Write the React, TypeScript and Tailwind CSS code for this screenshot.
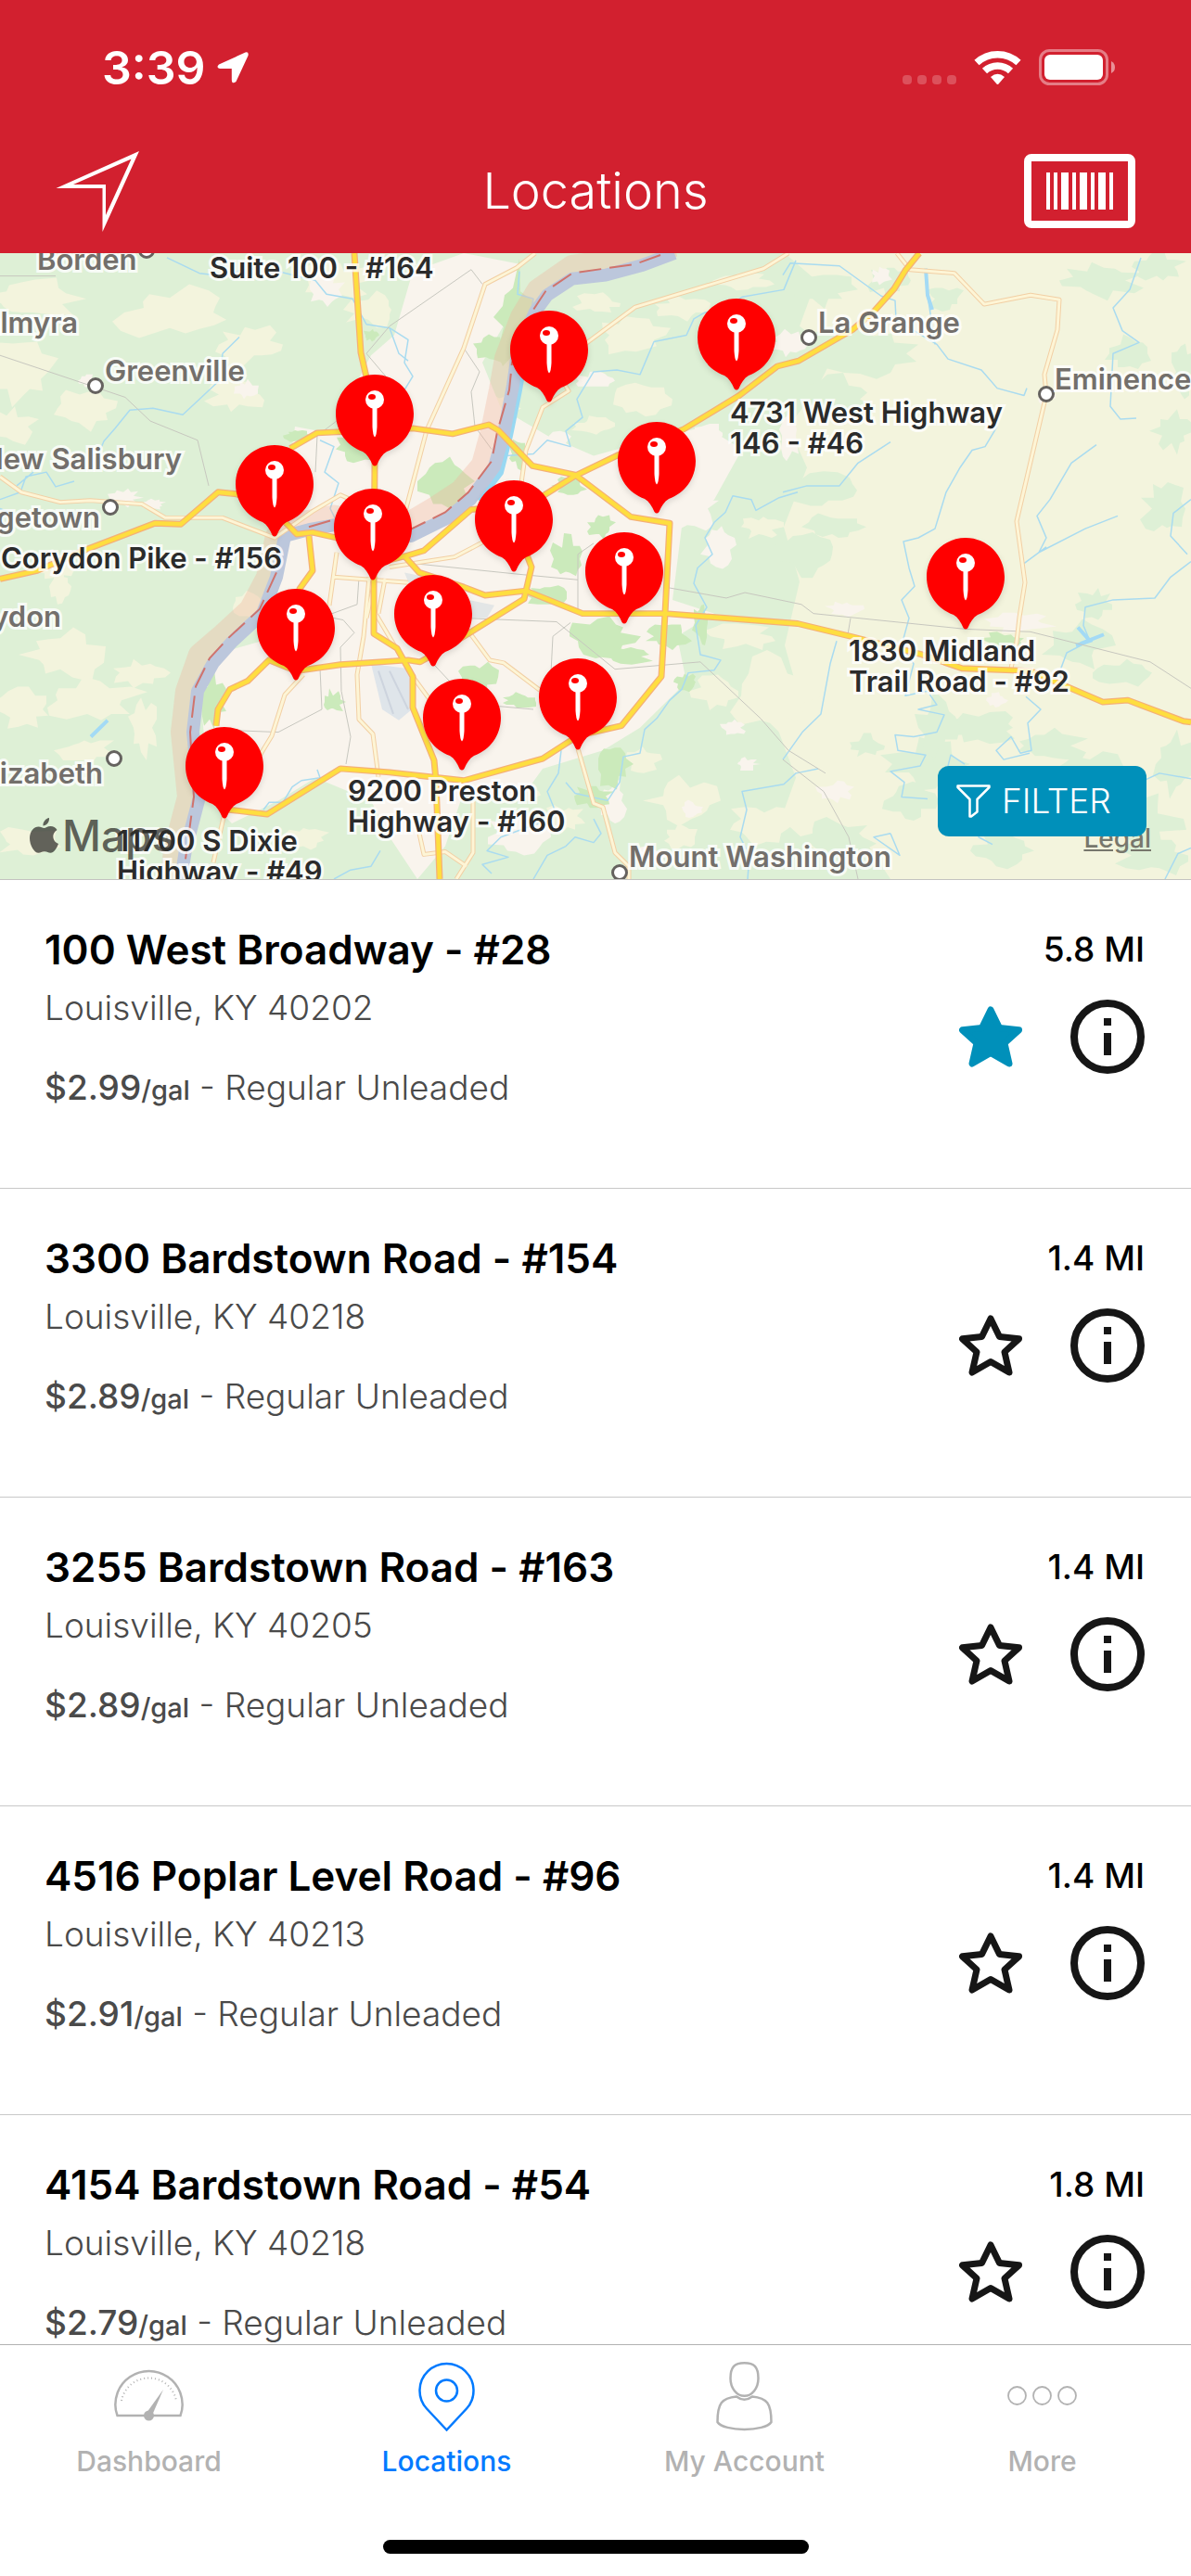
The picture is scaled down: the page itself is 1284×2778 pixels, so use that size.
import React, { useState } from 'react';

interface Station {
  id: number;
  name: string;
  city: string;
  price: string;
  distance: string;
}

interface Point {
  x: number;
  y: number;
}

interface MapLabel {
  lines: string[];
  top: number;
  left?: number;
  // names cut off by the left edge are anchored on their right end
  end?: number;
}

const stations: Station[] = [
  { id: 28, name: '100 West Broadway - #28', city: 'Louisville, KY 40202', price: '$2.99', distance: '5.8 MI' },
  { id: 154, name: '3300 Bardstown Road - #154', city: 'Louisville, KY 40218', price: '$2.89', distance: '1.4 MI' },
  { id: 163, name: '3255 Bardstown Road - #163', city: 'Louisville, KY 40205', price: '$2.89', distance: '1.4 MI' },
  { id: 96, name: '4516 Poplar Level Road - #96', city: 'Louisville, KY 40213', price: '$2.91', distance: '1.4 MI' },
  { id: 54, name: '4154 Bardstown Road - #54', city: 'Louisville, KY 40218', price: '$2.79', distance: '1.8 MI' },
];

const pins: Point[] = [
  { x: 794, y: 49 },
  { x: 592, y: 62 },
  { x: 404, y: 131 },
  { x: 708, y: 182 },
  { x: 296, y: 207 },
  { x: 554, y: 245 },
  { x: 402, y: 254 },
  { x: 673, y: 301 },
  { x: 1041, y: 307 },
  { x: 467, y: 347 },
  { x: 319, y: 362 },
  { x: 623, y: 437 },
  { x: 498, y: 459 },
  { x: 242, y: 511 },
];

const towns: MapLabel[] = [
  { lines: ['Borden'], left: 40, top: -10 },
  { lines: ['Palmyra'], end: 84, top: 58 },
  { lines: ['Greenville'], left: 113, top: 110 },
  { lines: ['New Salisbury'], end: 196, top: 205 },
  { lines: ['Georgetown'], end: 108, top: 268 },
  { lines: ['Corydon'], end: 66, top: 375 },
  { lines: ['Elizabeth'], end: 111, top: 544 },
  { lines: ['La Grange'], left: 882, top: 58 },
  { lines: ['Eminence'], left: 1137, top: 119 },
  { lines: ['Mount Washington'], left: 678, top: 634 },
];

const townDots: Point[] = [
  { x: 158, y: -3 },
  { x: 103, y: 143 },
  { x: 119, y: 274 },
  { x: 123, y: 545 },
  { x: 872, y: 91 },
  { x: 1128, y: 152 },
  { x: 668, y: 668 },
];

const storeLabels: MapLabel[] = [
  { lines: ['Suite 100 - #164'], left: 226, top: -1 },
  { lines: ['4731 West Highway', '146 - #46'], left: 787, top: 155 },
  { lines: ['Corydon Pike - #156'], end: 304, top: 312 },
  { lines: ['1830 Midland', 'Trail Road - #92'], left: 915, top: 412 },
  { lines: ['9200 Preston', 'Highway - #160'], left: 375, top: 563 },
  { lines: ['11700 S Dixie', 'Highway - #49'], left: 126, top: 617 },
];

const highways = [
  'M382 0 389 109 395 136 404 230 403 355 403 417 428 433 445 464 445 498 468 556 470 578 474 686',
  'M0 357 40 348 90 326 167 296 195 297 235 262 255 264 296 283 320 308 337 306 363 312 402 341 437 332 457 326 508 281 530 279 587 265 620 244 667 221 737 193 797 156 838 124 861 118 919 84 942 64 964 39 976 19 991 0',
  'M313 214 342 197 363 196 445 192 488 198 527 188 537 194 574 233 620 243 680 289 722 296 717 395 713 464 670 518 623 529 585 554 500 578 420 569 367 565 288 615 247 610',
  'M233 518 235 500 248 478 267 469 290 446 319 458 367 451 440 446 453 448 467 440 505 417 565 379 573 344 567 328',
  'M437 333 452 350 500 366 523 375 567 370 628 395 717 395 860 406 917 420 994 440 1037 455 1111 458 1189 492 1216 490 1276 513 1284 514',
  'M333 310 337 348 323 368 319 400',
];

const roads = [
  'M0 245 23 262 65 273 97 271 153 275 178 290 240 290 296 312 337 283 367 265 400 280',
  'M577 0 557 16 523 34 500 104 460 194 437 283',
  'M850 0 823 17 685 59 633 98 600 130 613 151 585 169 567 216 562 252',
  'M967 0 981 18 1029 22 1061 56 1111 46 1142 51 1140 84 1126 133 1128 155 1096 294 1105 361 1099 399 1096 426 1090 455',
  'M507 417 528 446 543 449 582 479',
  'M623 543 640 603 650 607 663 657 678 672 678 686',
  'M398 355 392 420 385 462 387 511 402 527 408 574',
  'M327 462 307 484 293 529 242 614 230 668',
  'M363 328 355 386M360 355 440 361',
  'M420 344 490 333 520 317',
  'M510 601 510 657 492 686M452 636 457 659 480 656 503 672',
  'M405 395 445 464 463 489 498 565',
  'M405 355 395 400M415 357 408 395',
];

const rails = [
  'M0 112 97 145 135 158 162 184 213 205 225 255',
  'M60 25 0 25M420 80 395 110 420 140 342 200 340 240M420 80 508 18 520 34',
  'M500 104 517 130 508 152 512 190 530 215',
  'M445 340 560 352 623 358 623 330 640 318M623 358 623 390',
  'M500 400 600 404 663 456 755 448 820 510 850 545 890 570',
  'M717 366 783 378 803 372 864 385 877 395 1041 412 1111 415 1240 448 1284 477',
  'M844 555 888 590 915 640 925 686M917 400 914 418',
  'M387 355 385 385 350 398 370 402 382 416 367 432 368 480 378 530 373 560M345 455 347 500 300 525 250 523',
  'M594 460 596 420 615 405M467 450 490 475 520 495 575 500',
];

const streams = [
  'M180 5 215 22 240 25 262 18M300 20 340 30 352 45 380 50 395 78 420 82 430 110 440 118',
  'M258 92 240 110 236 140 215 160 197 177 165 170 140 172 124 192 112 206 100 235',
  'M0 270 22 262 28 245 50 240 60 256 80 250M18 255 36 240M0 280 12 285',
  'M345 205 360 212 350 240 365 252 356 280 362 292M420 82 440 95 436 120 445 135 430 160',
  'M560 20 558 45 575 50 572 66M858 8 845 40 800 48 780 62 760 65 748 72 740 90 705 97 690 133 665 128 640 130 622 160 628 180 610 195 615 212 590 205 575 220 545 222',
  'M860 262 840 268 815 282 810 270 790 266 782 284 770 295 760 312 768 330 752 345 748 362 762 388 750 408 755 440 777 446 770 457 742 460 735 478 722 490 708 510 695 522 690 548 672 552 668 580 655 600 620 592 610 580',
  'M605 545 602 570 590 590 598 610 580 625 540 640 525 655 548 662 520 670 530 680',
  'M284 610 290 602 305 602 315 585 325 578 345 575 342 566',
  'M360 686 378 676 400 672 410 655M575 686 590 660 610 650 620 640 640 646 648 636 640 620',
  'M844 24 852 11 905 14 950 47 965 52 966 73 1010 100 1022 116 1058 128 1075 148 1104 156 1107 148',
  'M844 262 870 255 905 255 925 230 960 207',
  'M1075 190 1062 212 1048 216 1035 235 1020 262 1008 302 990 312 974 316 980 345 986 365 972 380 980 400 972 430 985 450 976 485 1000 480 1010 495 990 500 1018 506 1010 525 985 530 965 528 968 545 998 550 992 562 960 568 975 580 972 596 1000 598',
  'M1106 486 1122 500 1108 515 1112 545 1100 548 1090 530 1074 545 1082 555 1110 548',
  'M1182 210 1155 230 1132 270 1118 288 1128 312 1120 328 1170 302 1205 288M1104 340 1128 322',
  'M1230 5 1218 40 1200 60 1210 85 1228 98 1200 110 1197 168 1208 182 1225 181',
  'M1284 270 1265 285 1262 310 1280 330M1284 338 1262 355 1245 378 1200 380 1170 388 1168 408 1175 425 1150 438 1142 460 1150 480',
  'M844 555 865 525 885 505 895 450 902 425M1208 590 1250 570 1284 576M1256 686 1270 658 1284 652',
  'M1040 560 1025 550 1020 570 1065 600 1055 640 1070 648M960 636 970 660 942 640 960 636',
  'M998 17 1000 46 1008 100',
  'M882 565 858 570 845 582 800 590 805 610 798 640 808 660 806 686',
];

const river =
  'M727 0 693 13 653 24 617 28 590 46 577 64 558 109 553 145 543 198 533 234 507 270 483 290 443 310 402 306 360 298 333 303 307 310 298 355 283 395 250 426 230 449 213 480 208 525 215 596 200 654 195 686';

const riverBank =
  'M727 -8 680 5 617 14 580 40 562 70 545 115 539 150 530 195 520 232 497 260 470 278 440 296 402 296 360 288 325 295 298 310 288 355 270 390 238 420 215 440 201 480 196 525 203 596 188 654 185 686';

// jagged land cover outline, always the same for the same seed
const patch = (x: number, y: number, rx: number, ry: number, seed: number) => {
  const count = 18;
  const out: string[] = [];
  for (let i = 0; i < count; i++) {
    const noise = Math.abs(Math.sin(seed * 12.9898 + i * 78.233) * 43758.5453) % 1;
    const r = 0.5 + noise * 0.6;
    const a = (i / count) * Math.PI * 2;
    out.push(`${Math.round(x + Math.cos(a) * rx * r)},${Math.round(y + Math.sin(a) * ry * r)}`);
  }
  return out.join(' ');
};

const fields = [
  [30, 50, 60, 26], [190, 65, 75, 30], [270, 100, 42, 24], [255, 155, 34, 20], [20, 130, 42, 40],
  [90, 170, 40, 24], [10, 190, 34, 22], [60, 345, 26, 16], [70, 440, 55, 32], [100, 490, 60, 26],
  [25, 500, 34, 24], [150, 460, 34, 16], [155, 520, 18, 34], [95, 545, 34, 16], [65, 365, 16, 22],
  [270, 385, 26, 16], [30, 645, 40, 18], [360, 30, 44, 22], [400, 62, 32, 20], [490, 85, 26, 40],
  [680, 90, 46, 24], [735, 60, 34, 14], [645, 55, 28, 12], [690, 160, 34, 20], [640, 190, 26, 12],
  [800, 420, 40, 16], [835, 485, 48, 50], [770, 480, 26, 20], [740, 600, 44, 26], [690, 555, 22, 16],
  [820, 625, 40, 24], [610, 620, 26, 18], [560, 590, 28, 14], [330, 640, 26, 14], [800, 30, 36, 12],
  [540, 170, 20, 22], [820, 300, 24, 14], [770, 230, 24, 10], [735, 640, 22, 14],
];

const woods = [
  [935, 110, 70, 34], [900, 160, 50, 28], [880, 40, 46, 20], [1020, 50, 24, 14], [1185, 30, 50, 22],
  [1250, 15, 30, 18], [1215, 110, 26, 22], [1265, 195, 24, 26], [1255, 280, 26, 34], [1275, 130, 14, 30],
  [880, 260, 50, 24], [870, 330, 34, 26], [900, 300, 34, 16], [1160, 430, 40, 30], [1210, 460, 32, 16],
  [1180, 385, 22, 18], [900, 640, 50, 22], [1000, 560, 50, 28], [1060, 520, 52, 22], [1130, 540, 46, 22],
  [1220, 620, 60, 34], [1180, 570, 50, 24], [1265, 560, 26, 40], [980, 600, 34, 28], [1010, 520, 24, 40],
  [935, 540, 22, 14], [1245, 660, 44, 24], [1080, 655, 40, 22], [960, 30, 26, 18],
];

const suburbs = [
  [350, 40, 22, 22], [265, 150, 14, 12], [135, 268, 18, 10], [165, 275, 14, 6], [95, 140, 10, 8],
  [640, 140, 24, 10], [760, 200, 28, 14], [850, 100, 22, 16], [850, 200, 14, 30], [775, 320, 20, 26],
  [680, 240, 44, 16], [745, 280, 30, 26], [660, 600, 16, 26], [700, 660, 22, 12], [560, 640, 40, 26],
  [1128, 155, 10, 12], [1100, 405, 38, 12], [910, 390, 22, 10], [1075, 490, 12, 10], [900, 590, 22, 14],
  [745, 610, 14, 10], [950, 25, 12, 10], [600, 210, 20, 14], [790, 520, 14, 10], [805, 560, 14, 8],
];

const parks = [
  [555, 70, 24, 60], [530, 105, 20, 16], [385, 215, 26, 18], [480, 250, 32, 34], [560, 220, 14, 18],
  [615, 255, 20, 12], [648, 300, 16, 14], [612, 335, 20, 26], [590, 375, 26, 14], [650, 420, 40, 22],
  [675, 440, 34, 10], [515, 465, 22, 20], [560, 490, 22, 10], [228, 490, 16, 32], [358, 492, 14, 14],
  [400, 90, 10, 8], [740, 470, 14, 10], [660, 560, 24, 26], [640, 595, 22, 14], [1080, 425, 26, 10],
  [755, 405, 10, 26], [320, 200, 14, 8], [720, 420, 26, 14], [600, 470, 18, 8],
];

const BaseMap: React.FC = () => (
  <svg
    className="absolute inset-0 h-full w-full"
    viewBox="0 0 1284 686"
    preserveAspectRatio="none"
    fill="none"
    aria-hidden="true"
  >
    <rect width="1284" height="686" fill="#def0d6" />
    <path
      d="M846 0 880 30 862 80 900 110 880 150 850 190 870 235 845 300 862 360 846 430 860 480 838 520 858 575 842 620 880 655 930 640 960 686H1284V0Z"
      fill="#f3f4dd"
    />
    {fields.map(([x, y, rx, ry], i) => (
      <polygon key={i} points={patch(x, y, rx, ry, i + 1)} fill="#f3f4dd" />
    ))}
    {woods.map(([x, y, rx, ry], i) => (
      <polygon key={i} points={patch(x, y, rx, ry, i + 60)} fill="#def0d6" />
    ))}
    {/* Louisville metro area */}
    <path
      d="M400 112 425 90 445 20 500 0 560 12 548 70 520 120 540 170 590 200 640 222 700 205 760 190 800 215 770 270 735 300 725 380 770 395 730 420 740 470 690 520 650 545 585 565 560 600 500 590 480 650 450 686 420 640 400 600 340 575 300 600 250 625 226 600 222 540 240 480 285 440 292 400 305 350 300 310 310 250 318 190 370 200 380 150Z"
      fill="#f9f4ed"
    />
    <path d="M215 470 230 440 300 420 320 470 290 560 225 590Z" fill="#f9f4ed" />
    {suburbs.map(([x, y, rx, ry], i) => (
      <polygon key={i} points={patch(x, y, rx, ry, i + 120)} fill="#f9f4ed" />
    ))}
    {parks.map(([x, y, rx, ry], i) => (
      <polygon key={i} points={patch(x, y, rx, ry, i + 180)} fill="#cbeabb" />
    ))}
    <path d="M400 450 445 456 444 500 430 512 412 500Z" fill="#dfe5ea" />
    <path d="M505 380 533 386 525 400 500 400ZM436 350 460 355 470 370 445 372Z" fill="#e3e6e6" />
    <path d="M408 458 424 505M420 458 440 500" stroke="#cdd4de" strokeWidth="2" />

    {streams.map((d) => (
      <path key={d} d={d} stroke="#a9dbf0" strokeWidth="1.500" strokeLinejoin="round" />
    ))}
    <path d="M998 17 1000 46 1005 62M1162 410 1175 425 1160 430M1165 428 1190 418M98 530 116 512" stroke="#a3daf5" strokeWidth="4" />
    {rails.map((d) => (
      <path key={d} d={d} stroke="#c6c6be" strokeWidth="1" />
    ))}

    <path d={riverBank} stroke="#f0b49a" strokeOpacity="0.34" strokeWidth="24" strokeLinejoin="round" />
    <path d="M564 115 558 150 548 200 538 240 515 270" stroke="#98d8f2" strokeWidth="10" />
    <path d={river} stroke="#bcc7dc" strokeWidth="14" strokeLinejoin="round" />
    <path
      d="M712 2 685 12 617 22 588 42 575 62 552 120 549 150 536 196 530 228 505 262 480 284 440 304M333 300 360 292M298 350 280 390 246 422 226 444 211 475 205 525 209 596 200 664"
      stroke="#d0736c"
      strokeWidth="2"
      strokeDasharray="24 9"
    />

    {roads.map((d) => (
      <path key={d} d={d} stroke="#f2cfa4" strokeWidth="5" strokeLinejoin="round" />
    ))}
    {roads.map((d) => (
      <path key={d} d={d} stroke="#fdf5d6" strokeWidth="3" strokeLinejoin="round" />
    ))}
    {highways.map((d) => (
      <path key={d} d={d} stroke="#f5b077" strokeWidth="7" strokeLinejoin="round" />
    ))}
    {highways.map((d) => (
      <path key={d} d={d} stroke="#fede3f" strokeWidth="4.500" strokeLinejoin="round" />
    ))}
  </svg>
);

const PinIcon: React.FC = () => (
  <svg className="h-[99px] w-[84px] drop-shadow-md" viewBox="0 0 84 99" aria-hidden="true">
    <path
      d="M42 0C65.200 0 84 18.800 84 42C84 61 72 77 55 83C50 86 47 91 44.500 97Q42 100 39.500 97C37 91 34 86 29 83C12 77 0 61 0 42C0 18.800 18.800 0 42 0Z"
      fill="#ff0000"
    />
    <path d="M39.500 34H44.500V56Q44 66 42 67.500Q40 66 39.500 56Z" fill="#fff" />
    <circle cx="42" cy="27" r="10" fill="#fff" />
    <ellipse cx="39" cy="24" rx="4" ry="3" fill="#ff0000" />
  </svg>
);

const LabelText: React.FC<{ label: MapLabel; className: string }> = ({ label, className }) => (
  <div
    className={`absolute text-[31px] leading-[33px] font-semibold whitespace-nowrap [paint-order:stroke_fill] [-webkit-text-stroke:6px_#ffffffcc] ${className}`}
    style={{
      top: label.top,
      left: label.left,
      right: label.end === undefined ? undefined : `calc(100% - ${label.end}px)`,
    }}
  >
    {label.lines.map((line) => (
      <div key={line}>{line}</div>
    ))}
  </div>
);

const StationMap: React.FC = () => (
  <section aria-label="Map" className="relative h-[676px] shrink-0 overflow-hidden border-b border-[#c3c3c0]">
    <BaseMap />

    {townDots.map((dot) => (
      <span
        key={`${dot.x}-${dot.y}`}
        className="absolute size-[18px] -translate-1/2 rounded-full border-3 border-[#65625f] bg-white"
        style={{ left: dot.x, top: dot.y }}
      />
    ))}
    {towns.map((label) => (
      <LabelText key={label.lines[0]} label={label} className="text-[#736f6b]" />
    ))}
    {storeLabels.map((label) => (
      <LabelText key={label.lines[0]} label={label} className="text-[#2b2b2b]" />
    ))}
    {pins.map((pin) => (
      <button
        key={`${pin.x}-${pin.y}`}
        type="button"
        aria-label="Station"
        className="absolute -translate-x-1/2"
        style={{ left: pin.x, top: pin.y }}
      >
        <PinIcon />
      </button>
    ))}

    <div className="absolute bottom-[22px] left-8 flex items-center gap-1 text-[#32322d]/75">
      <svg className="h-[38px] w-[31px]" viewBox="0 0 31 38" fill="currentColor" aria-hidden="true">
        <path d="M21 0C21.500 4.500 18 8.500 14.500 8.500C14 4.500 17.500 .5 21 0ZM15.500 11C17.500 11 19 9 22.500 9C25.500 9 28 10.500 29.500 13C23 17 24.500 25.500 31 28C29 33 26 37.800 22.500 37.800C19.800 37.800 19.200 36.200 16 36.200C12.800 36.200 12 37.800 9.500 37.800C5 37.800 0 29.500 0 22C0 14 5 9.500 9.500 9.500C12 9.500 14 11 15.500 11Z" />
      </svg>
      <span className="text-[46px] leading-[50px] font-medium">Maps</span>
    </div>
    <a href="#legal" className="absolute right-[43px] bottom-7 text-[28px] leading-[32px] font-medium text-[#77776c] underline">
      Legal
    </a>
    <button
      type="button"
      className="absolute right-12 bottom-[46px] flex h-[76px] w-[225px] items-center gap-3 rounded-xl bg-[#0090ba] pl-5 text-[37px] font-light text-white"
    >
      <svg className="h-9 w-[37px]" viewBox="0 0 37 36" fill="none" stroke="currentColor" strokeWidth="2.500" strokeLinejoin="round" aria-hidden="true">
        <path d="M1.500 1.500H35.500V3L22.500 16V29.500L16 34.500H14.500V16L1.500 3Z" />
      </svg>
      FILTER
    </button>
  </section>
);

const StatusBar: React.FC = () => (
  <div className="flex h-[146px] items-center justify-between pr-[82px] pl-[110px] text-white">
    <div className="flex items-center gap-3 text-[50px] leading-[60px] font-semibold">
      3:39
      <svg className="h-[34px] w-[34px]" viewBox="0 0 34 34" fill="currentColor" aria-hidden="true">
        <path d="M2 13.500 30.500 .5Q34.500 -.5 33.500 4L20.500 32Q16 35.500 15.800 30V18H3Q-1.500 17 2 13.500Z" />
      </svg>
    </div>
    <svg className="h-10 w-[230px]" viewBox="972 53 230 40" aria-hidden="true">
      <g fill="#fff" fillOpacity="0.22">
        <rect x="973" y="81" width="10" height="10" rx="4" />
        <rect x="989" y="81" width="10" height="10" rx="4" />
        <rect x="1005" y="81" width="10" height="10" rx="4" />
        <rect x="1021" y="81" width="10" height="10" rx="4" />
      </g>
      <g fill="none" stroke="#fff" strokeWidth="7.500">
        <path d="M1053 67.500A33 33 0 0 1 1098 67.500" />
        <path d="M1061.500 76.500A20.500 20.500 0 0 1 1089.500 76.500" />
      </g>
      <path d="M1068 83Q1075.500 76.500 1083 83L1076.500 90.500Q1075.500 91.500 1074.500 90.500Z" fill="#fff" />
      <rect x="1121.500" y="54.500" width="72" height="36" rx="10" fill="none" stroke="#fff" strokeOpacity="0.42" strokeWidth="3" />
      <rect x="1126" y="59" width="63" height="27" rx="6" fill="#fff" />
      <path d="M1198 66Q1202 68 1202 72.500T1198 79Z" fill="#fff" fillOpacity="0.5" />
    </svg>
  </div>
);

const Header: React.FC = () => (
  <header className="shrink-0 bg-[#d2202f] font-light text-white">
    <StatusBar />
    <div className="grid h-[127px] grid-cols-[1fr_auto_1fr] items-center px-[60px] pb-2">
      <button type="button" aria-label="Center on my location" className="justify-self-start">
        <svg className="h-[88px] w-[90px]" viewBox="0 0 90 88" fill="currentColor" fillRule="evenodd" aria-hidden="true">
          <path d="M.5 41 90 1 50.500 88V41ZM19 37H54V70L81.500 9.500Z" />
        </svg>
      </button>
      <h1 className="text-[54px] leading-[60px]">Locations</h1>
      <button type="button" aria-label="Show my barcode" className="justify-self-end">
        <svg className="h-20 w-[120px]" viewBox="0 0 120 80" aria-hidden="true">
          <rect x="4" y="4" width="112" height="72" rx="4" fill="none" stroke="#fff" strokeWidth="8" />
          <path
            d="M24 20h4v40h-4zM32 20h4v40h-4zM40 20h8v40h-8zM52 20h4v40h-4zM60 20h8v40h-8zM72 20h4v40h-4zM80 20h8v40h-8zM92 20h4v40h-4z"
            fill="#fff"
          />
        </svg>
      </button>
    </div>
  </header>
);

const StationRow: React.FC<{ station: Station; favorite: boolean; onToggle: () => void }> = ({
  station,
  favorite,
  onToggle,
}) => (
  <li className="flex h-[333px] shrink-0 justify-between border-b border-[#c8c8c8] pt-[50px] pr-[50px] pl-12">
    <div className="text-[37px] leading-[44px] font-light text-[#4a4a4a]">
      <h2 className="text-[44px] leading-[50px] font-semibold text-black">{station.name}</h2>
      <p className="mt-4">{station.city}</p>
      <p className="mt-[42px]">
        <span className="font-medium">{station.price}</span>
        <span className="text-[29px] font-medium">/gal</span> - Regular Unleaded
      </p>
    </div>
    <div className="flex flex-col items-end">
      <p className="text-[37px] leading-[50px] font-medium text-black">{station.distance}</p>
      <div className="mt-[29px] flex items-center gap-[52px]">
        <button type="button" aria-label="Favorite" aria-pressed={favorite} onClick={onToggle}>
          <svg
            className={`h-[66px] w-[68px] ${favorite ? 'fill-[#0090ba] stroke-[#0090ba]' : 'fill-none stroke-[#161616]'}`}
            viewBox="0 0 68 66"
            strokeWidth="7"
            strokeLinejoin="round"
            aria-hidden="true"
          >
            <path d="M34 4 43.500 23.500 64.500 25.800 49 40 54 62 34 50.500 14 62 19 40 3.500 25.800 24.500 23.500Z" />
          </svg>
        </button>
        <button type="button" aria-label="Station details">
          <svg className="size-20" viewBox="0 0 80 80" aria-hidden="true">
            <circle cx="40" cy="40" r="36" fill="none" stroke="#161616" strokeWidth="8" />
            <path d="M36 20h8v8h-8zM36 36h8v24h-8z" fill="#161616" />
          </svg>
        </button>
      </div>
    </div>
  </li>
);

const DashboardIcon: React.FC = () => (
  <svg className="size-[75px]" viewBox="0 0 75 75" fill="none" stroke="currentColor" strokeWidth="2.500" aria-hidden="true">
    <path d="M3.500 58Q-1 46 3.800 33A36.200 36.200 0 0 1 71.200 33Q76 46 71.500 58Z" />
    <path d="M8 42A30 30 0 0 1 67 42" strokeWidth="2" strokeDasharray="1 3" />
    <path d="M35 55 53 30 40 60Z" fill="currentColor" stroke="none" />
    <circle cx="37.500" cy="58" r="5.500" fill="currentColor" stroke="none" />
  </svg>
);

const LocationsIcon: React.FC = () => (
  <svg className="size-[75px]" viewBox="0 0 75 75" fill="none" stroke="currentColor" strokeWidth="2.500" aria-hidden="true">
    <path d="M37.500 73.500 16 50.500A29 29 0 1 1 59 50.500Z" />
    <circle cx="37.500" cy="31" r="11.500" />
  </svg>
);

const AccountIcon: React.FC = () => (
  <svg className="size-[75px]" viewBox="0 0 75 75" fill="none" stroke="currentColor" strokeWidth="2.500" aria-hidden="true">
    <path d="M37.500 1.300C48 1.300 52.500 5.500 52.500 18C52.500 28 46 36.800 37.500 36.800S22.500 28 22.500 18C22.500 5.500 27 1.300 37.500 1.300Z" />
    <path d="M29 37.500Q37.500 44 46 37.500C62 39 66.500 45 66.500 65C60 75.500 15 75.500 8.500 65C8.500 45 13 39 29 37.500Z" />
  </svg>
);

const MoreIcon: React.FC = () => (
  <svg className="size-[75px]" viewBox="0 0 75 75" fill="none" stroke="currentColor" strokeWidth="1.800" aria-hidden="true">
    <circle cx="10.500" cy="36.500" r="9.500" />
    <circle cx="37.500" cy="36.500" r="9.500" />
    <circle cx="64.500" cy="36.500" r="9.500" />
  </svg>
);

const tabs = [
  { name: 'Dashboard', Icon: DashboardIcon },
  { name: 'Locations', Icon: LocationsIcon },
  { name: 'My Account', Icon: AccountIcon },
  { name: 'More', Icon: MoreIcon },
];

export default function App() {
  const [favorites, setFavorites] = useState<number[]>([28]);
  const [activeTab, setActiveTab] = useState('Locations');

  const toggleFavorite = (id: number) => {
    setFavorites((prev) => (prev.includes(id) ? prev.filter((f) => f !== id) : [...prev, id]));
  };

  return (
    <div className="flex h-screen flex-col overflow-hidden bg-white font-['Inter',sans-serif]">
      <Header />
      <StationMap />

      <ul className="flex min-h-0 flex-1 flex-col overflow-hidden">
        {stations.map((station) => (
          <StationRow
            key={station.id}
            station={station}
            favorite={favorites.includes(station.id)}
            onToggle={() => toggleFavorite(station.id)}
          />
        ))}
      </ul>

      <footer className="flex shrink-0 flex-col items-center border-t border-[#b2b2b2] bg-white pb-6">
        <nav className="grid w-full grid-cols-4 pt-[18px]">
          {tabs.map(({ name, Icon }) => (
            <button
              key={name}
              type="button"
              onClick={() => setActiveTab(name)}
              className={`flex flex-col items-center gap-[14px] text-[30px] leading-9 font-medium ${
                activeTab === name ? 'text-[#007aff]' : 'text-[#b2b2b2]'
              }`}
            >
              <Icon />
              {name}
            </button>
          ))}
        </nav>
        <div className="mt-[67px] h-[15px] w-[459px] rounded-full bg-black" />
      </footer>
    </div>
  );
}
